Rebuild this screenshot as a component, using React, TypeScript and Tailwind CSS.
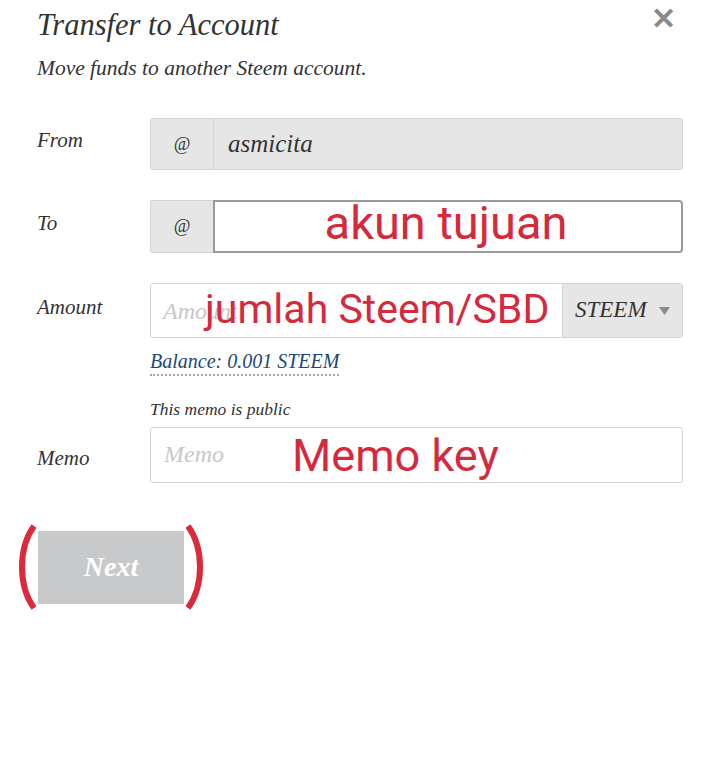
import React from 'react';

const serif = { fontFamily: '"Liberation Serif", "DejaVu Serif", serif' };
const sans = { fontFamily: 'Roboto, "Noto Sans", sans-serif' };

function Label({ text, low }: { text: string; low?: boolean }) {
  return (
    <div
      className={low ? 'w-[113px] shrink-0 text-[21px] italic text-[#333] pt-[8px]' : 'w-[113px] shrink-0 text-[21px] italic text-[#333] pb-[6px]'}
      style={serif}
    >
      {text}
    </div>
  );
}

function Paren({ side }: { side: 'left' | 'right' }) {
  const d = side === 'left' ? 'M18 3 C 2 25, 2 63, 18 85' : 'M4 3 C 20 25, 20 63, 4 85';
  return (
    <svg width="22" height="88" viewBox="0 0 22 88" className="shrink-0">
      <path d={d} fill="none" stroke="#dc2a3c" strokeWidth="6" strokeLinecap="butt" />
    </svg>
  );
}

export default function App() {
  return (
    <div className="w-[720px] h-[770px] bg-white relative" style={serif}>
      <button className="absolute right-[44px] top-[4px] text-[30px] leading-none font-bold text-[#8a8a8a]" style={sans}>
        ✕
      </button>
      <div className="pl-[37px] pr-[37px] pt-[7px]">
        <h1 className="text-[30.5px] italic text-[#333] leading-[36px]">Transfer to Account</h1>
        <p className="mt-[12px] text-[21.5px] italic text-[#333] leading-[26px]">Move funds to another Steem account.</p>

        {/* From */}
        <div className="mt-[37px] flex items-center">
          <Label text="From" />
          <div className="flex h-[52px] flex-1 rounded-[3px] border border-[#d4d4d4] bg-[#e6e6e6]">
            <div className="w-[63px] flex items-center justify-center border-r border-[#d4d4d4] text-[18px] italic text-[#333]">@</div>
            <div className="flex-1 flex items-center pl-[14px] text-[25px] italic text-[#333]">asmicita</div>
          </div>
        </div>

        {/* To */}
        <div className="mt-[30px] flex items-center">
          <Label text="To" />
          <div className="flex h-[53px] flex-1">
            <div className="w-[63px] flex items-center justify-center rounded-l-[3px] border border-r-0 border-[#d4d4d4] bg-[#e6e6e6] text-[18px] italic text-[#333]">@</div>
            <div className="flex-1 flex items-center justify-center rounded-r-[4px] border-2 border-[#9a9a9a] bg-white">
              <span className="text-[47px] leading-none text-[#d42a3c] pb-[8px] pr-[4px]" style={sans}>akun tujuan</span>
            </div>
          </div>
        </div>

        {/* Amount */}
        <div className="mt-[30px] flex items-center">
          <Label text="Amount" />
          <div className="flex h-[55px] flex-1 rounded-[3px] border border-[#d4d4d4]">
            <div className="relative flex-1 flex items-center pl-[12px] bg-white rounded-l-[3px]">
              <span className="text-[24px] italic text-[#c8c8c8]">Amount</span>
              <span className="absolute left-[54px] top-[0px] text-[41px] leading-[50px] text-[#d42a3c]" style={sans}>jumlah Steem/SBD</span>
            </div>
            <div className="w-[120px] flex items-center gap-[12px] pl-[12px] border-l border-[#d4d4d4] bg-[#e6e6e6]">
              <span className="text-[23px] italic text-[#333]">STEEM</span>
              <svg width="11" height="8" viewBox="0 0 11 8"><path d="M0 0 L11 0 L5.5 8 Z" fill="#8a8a8a" /></svg>
            </div>
          </div>
        </div>

        <div className="ml-[113px] mt-[12px] leading-[22px]">
          <span className="text-[20px] italic text-[#1b4876] border-b-2 border-dotted border-[#9aa8b8] pb-[2px]">Balance: 0.001 STEEM</span>
        </div>

        <div className="ml-[113px] mt-[25px] text-[17.5px] italic text-[#333] leading-[20px]">This memo is public</div>

        {/* Memo */}
        <div className="mt-[8px] flex items-center">
          <Label text="Memo" low />
          <div className="relative flex h-[56px] flex-1 items-center rounded-[3px] border border-[#d4d4d4] bg-white pl-[13px]">
            <span className="text-[24px] italic text-[#c8c8c8] pb-[2px]">Memo</span>
            <span className="absolute left-[141px] top-[2px] text-[45px] leading-[52px] text-[#d42a3c]" style={sans}>Memo key</span>
          </div>
        </div>
      </div>

      <div className="mt-[40px] ml-[16px] flex items-center">
        <Paren side="left" />
        <button className="h-[73px] w-[146px] bg-[#c8c9cb] text-[28px] font-bold italic text-white">Next</button>
        <Paren side="right" />
      </div>
    </div>
  );
}
